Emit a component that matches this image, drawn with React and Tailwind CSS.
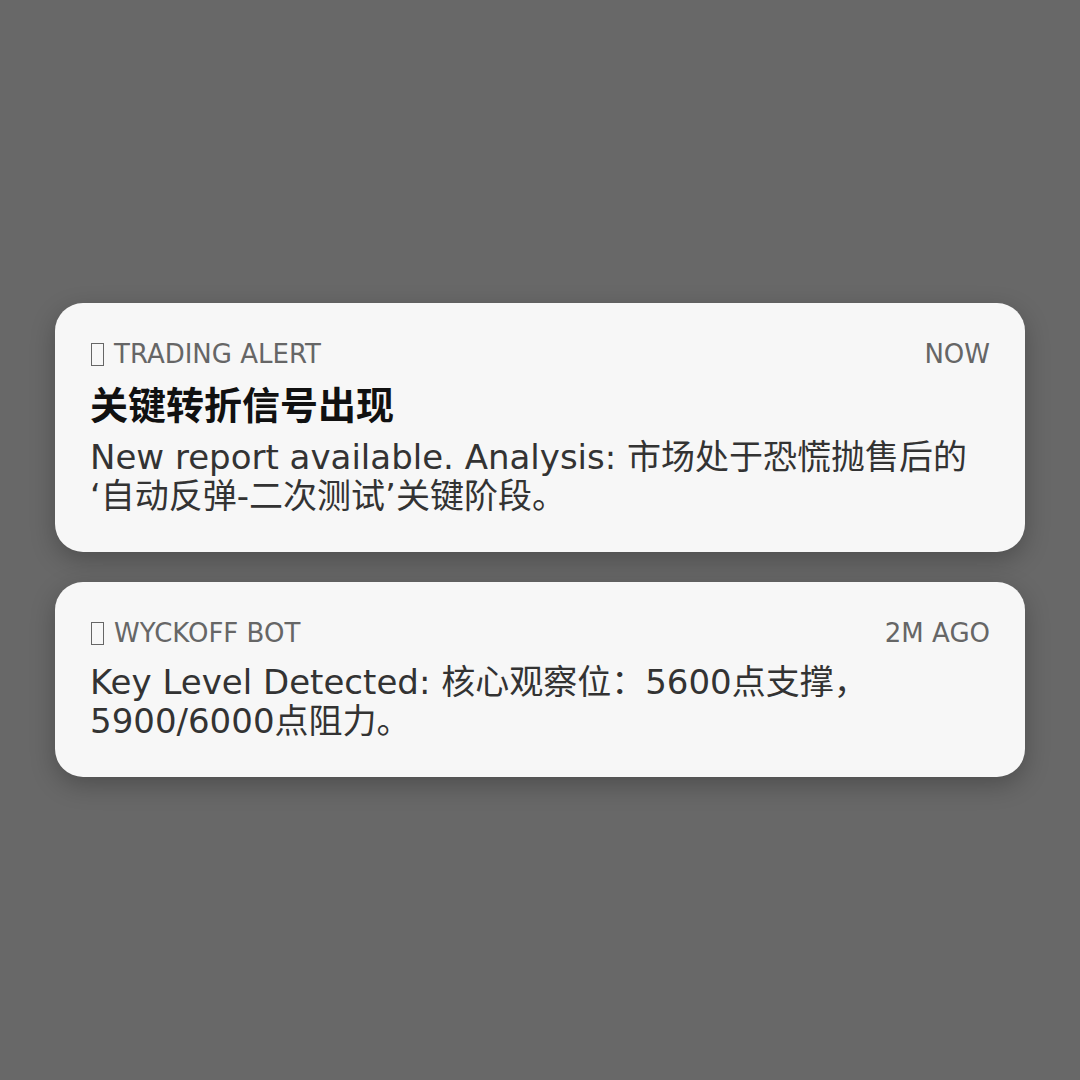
export default function App() {
  const notes = [
    {
      app: 'TRADING ALERT',
      time: 'NOW',
      title: '关键转折信号出现',
      lines: ['New report available. Analysis: 市场处于恐慌抛售后的', '‘自动反弹-二次测试’关键阶段。']
    },
    {
      app: 'WYCKOFF BOT',
      time: '2M AGO',
      lines: ['Key Level Detected: 核心观察位：5600点支撑，', '5900/6000点阻力。']
    }
  ];

  return (
    <div
      className="min-h-screen bg-[#686868] flex flex-col justify-center gap-[30px] px-[55px]"
      style={{ fontFamily: '"DejaVu Sans", "Noto Sans CJK SC", sans-serif' }}
    >
      {notes.map((n) => (
        <div
          key={n.app}
          className="bg-[#f7f7f7] rounded-[28px] px-[35px] pt-[36px] pb-[36px] shadow-[0_8px_24px_rgba(0,0,0,0.25)]"
        >
          <div className="flex items-center justify-between text-[26px] leading-[30px] text-[#666666] mb-[15px]">
            <span className="flex items-center">
              {/* missing-glyph box, as in the source */}
              <span className="inline-block w-[13px] h-[23px] border-[1.5px] border-[#666666] ml-[1px] mr-[10px]" />
              {n.app}
            </span>
            <span>{n.time}</span>
          </div>
          {n.title && (
            <h2 className="text-[38px] leading-[44px] font-bold text-[#111111] mb-[10px]">{n.title}</h2>
          )}
          <p className="text-[34px] leading-[39px] text-[#333333]">
            {n.lines.map((l) => (
              <span key={l} className="block whitespace-nowrap">{l}</span>
            ))}
          </p>
        </div>
      ))}
    </div>
  );
}
